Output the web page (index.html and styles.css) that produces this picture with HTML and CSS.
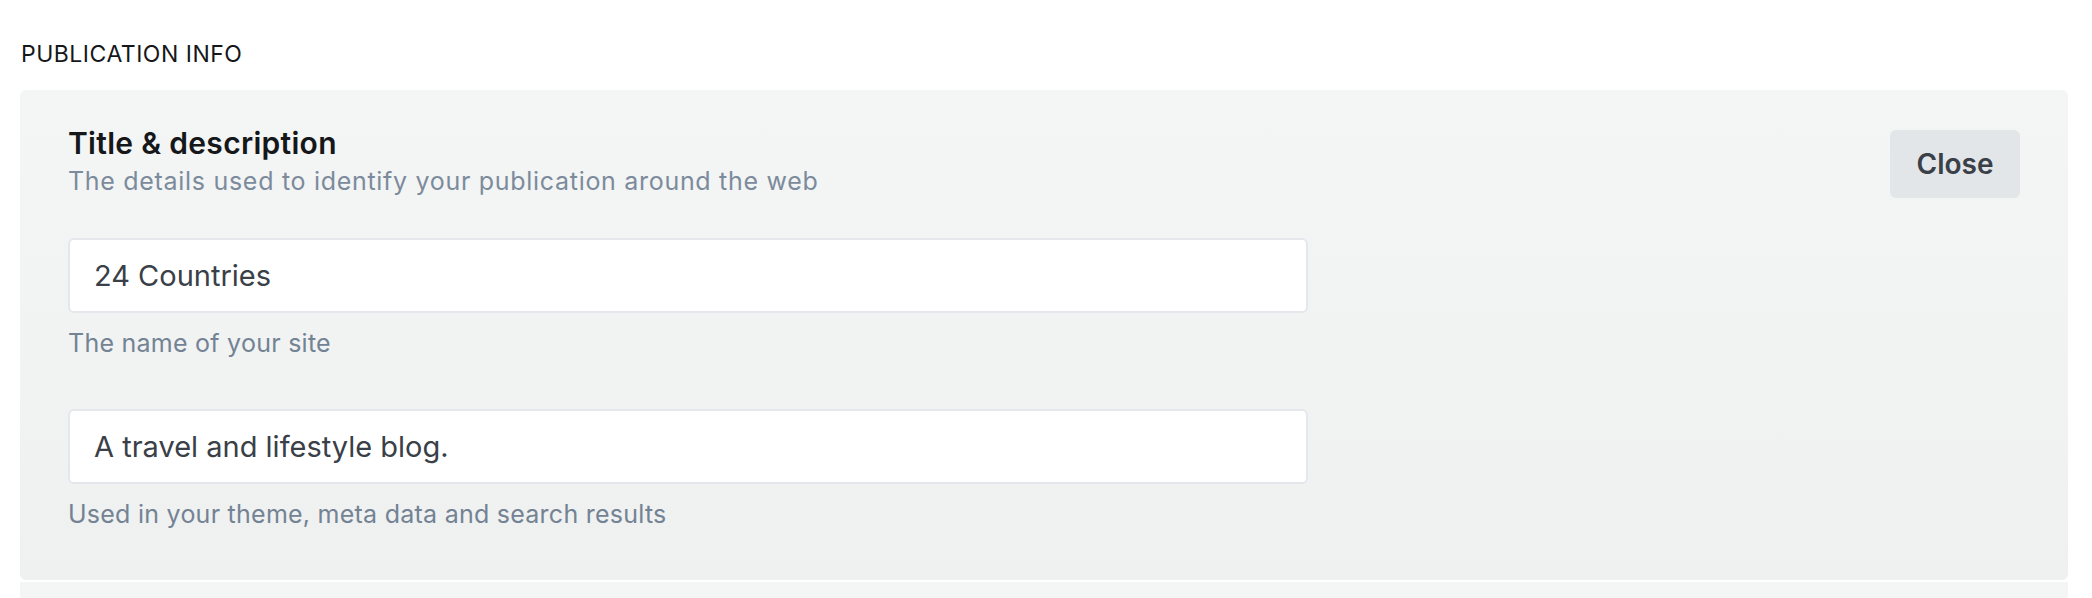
FILE: index.html
```html
<!DOCTYPE html>
<html lang="en">
<head>
<meta charset="utf-8">
<title>Publication info</title>
<link rel="stylesheet" href="styles.css">
</head>
<body>
<main class="page">
  <h2 class="section-title">PUBLICATION INFO</h2>
  <div class="groups">
    <section class="group">
      <div class="group-header">
        <div class="group-text">
          <h3 class="group-title">Title &amp; description</h3>
          <p class="group-desc">The details used to identify your publication around the web</p>
        </div>
        <button class="btn" type="button">Close</button>
      </div>
      <div class="field first">
        <input class="input" type="text" value="24 Countries">
        <p class="help">The name of your site</p>
      </div>
      <div class="field">
        <input class="input" type="text" value="A travel and lifestyle blog.">
        <p class="help">Used in your theme, meta data and search results</p>
      </div>
    </section>
    <section class="group next" aria-hidden="true"></section>
  </div>
</main>
</body>
</html>
```

FILE: styles.css
```css
html, body {
  margin: 0;
  padding: 0;
  background: #ffffff;
}

body {
  font-family: Inter, "Noto Sans", "Liberation Sans", sans-serif;
  color: #15171a;
}

.page {
  padding: 40px 24px 0 20px;
}

.section-title {
  margin: 0 0 22px 1px;
  font-size: 23px;
  line-height: 28px;
  font-weight: 400;
  letter-spacing: 0.5px;
  color: #15171a;
}

.groups {
  display: flex;
  flex-direction: column;
  gap: 2px;
}

.group {
  border-radius: 6px;
  background: linear-gradient(180deg, #f4f5f5 0%, #eff0f0 100%);
  padding: 35px 48px 50px 48px;
}

.group.next {
  border-radius: 0;
  background: #f4f5f5;
  padding: 0;
  height: 120px;
}

.group-header {
  display: flex;
  justify-content: space-between;
  align-items: flex-start;
}

.group-title {
  margin: 0;
  font-size: 30px;
  line-height: 37px;
  font-weight: 600;
  letter-spacing: 0.3px;
  color: #15171a;
}

.group-desc {
  margin: 3px 0 0 0;
  font-size: 25px;
  line-height: 32px;
  font-weight: 400;
  letter-spacing: 0.7px;
  color: #7c8b9c;
}

.btn {
  margin-top: 5px;
  width: 130px;
  height: 68px;
  border: 0;
  border-radius: 6px;
  background: #e3e6e9;
  color: #394047;
  font-family: inherit;
  font-size: 28px;
  font-weight: 600;
  padding: 0;
}

.field {
  margin-top: 50px;
  width: 1240px;
}

.field.first {
  margin-top: 40px;
}

.input {
  display: block;
  box-sizing: border-box;
  width: 100%;
  height: 75px;
  margin: 0;
  padding: 0 24px;
  border: 2px solid #e4e7eb;
  border-radius: 6px;
  background: #ffffff;
  font-family: inherit;
  font-size: 29px;
  color: #394047;
  outline: none;
}

.help {
  margin: 14px 0 0 0;
  font-size: 25px;
  line-height: 32px;
  letter-spacing: 0.25px;
  color: #738394;
}
```
